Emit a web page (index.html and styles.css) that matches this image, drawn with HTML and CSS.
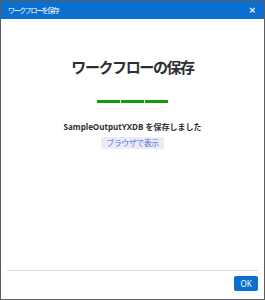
FILE: index.html
```html
<!doctype html>
<html lang="ja">
<head>
    <meta charset="UTF-8">
    <title>ワークフローを保存</title>
    <link rel="stylesheet" href="styles.css">
</head>
<body>
<div class="dialog">
    <div class="dialog-title">
        <span>ワークフローを保存</span>
        <span class="close">×</span>
    </div>
    <div class="dialog-body">
        <h1>ワークフローの保存</h1>
        <div class="progress">
            <span></span><span></span><span></span>
        </div>
        <p class="saved">SampleOutputYXDB を保存しました</p>
        <button class="link-btn">ブラウザで表示</button>
    </div>
    <div class="dialog-footer">
        <button class="ok">OK</button>
    </div>
</div>
</body>
</html>
```
FILE: styles.css
```css
html, body {
    margin: 0;
    padding: 0;
}

body {
    font-family: "Noto Sans CJK JP", "Noto Sans", sans-serif;
    background: #fff;
}

.dialog {
    width: 265px;
    height: 300px;
    box-sizing: border-box;
    border: 1px solid #5c5c5c;
    display: flex;
    flex-direction: column;
}

.dialog-title {
    height: 18px;
    background: #0b6fd0;
    color: #fff;
    font-size: 7px;
    letter-spacing: -1.4px;
    display: flex;
    align-items: center;
    justify-content: space-between;
    padding: 0 8px 0 7px;
}

.dialog-title .close {
    font-size: 9px;
    font-weight: bold;
    letter-spacing: 0;
    font-family: "DejaVu Sans", sans-serif;
}

.dialog-body {
    flex: 1;
    display: flex;
    flex-direction: column;
    align-items: center;
}

.dialog-body h1 {
    margin: 37px 0 0;
    font-size: 15px;
    letter-spacing: -1.4px;
    line-height: 22px;
    font-weight: bold;
    color: #2b2f33;
}

.progress {
    display: flex;
    gap: 1px;
    margin-top: 22px;
}

.progress span {
    width: 23px;
    height: 3px;
    background: #139a13;
}

.saved {
    margin: 17px 0 0;
    font-size: 8px;
    line-height: 13px;
    font-weight: bold;
    color: #2b2f33;
    font-family: "Open Sans", "Noto Sans CJK JP", sans-serif;
}

.link-btn {
    margin-top: 4px;
    border: none;
    background: #e9ecf6;
    color: #5b72d6;
    font-family: "Noto Sans CJK JP", sans-serif;
    font-size: 8px;
    letter-spacing: -0.5px;
    line-height: 12px;
    padding: 0 5px;
    border-radius: 2px;
}

.dialog-footer {
    margin: 0 6px;
    border-top: 1px solid #d9dbdf;
    height: 28px;
    display: flex;
    justify-content: flex-end;
    align-items: flex-start;
}

.ok {
    margin-top: 5px;
    width: 24px;
    height: 15px;
    border: none;
    border-radius: 2px;
    background: #0b6fd0;
    color: #fff;
    font-family: "Noto Sans", sans-serif;
    font-size: 8px;
    padding: 0;
}
```
